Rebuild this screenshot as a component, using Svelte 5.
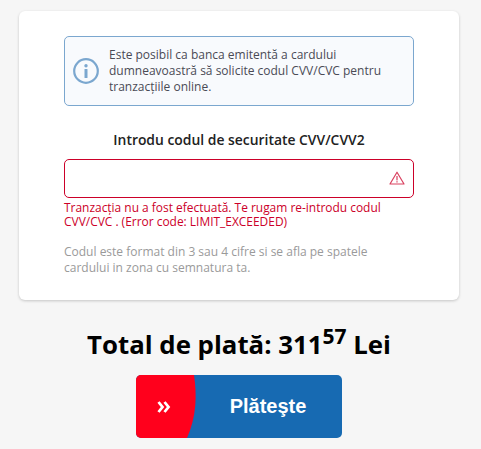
<script>
  // Card payment security code step: info note, CVV field with error, total and pay button.
  let code = '';
</script>

<main class="page">
  <section class="card">
    <div class="notice">
      <svg class="notice-icon" viewBox="0 0 26 26" width="26" height="26" aria-hidden="true">
        <circle cx="13" cy="13" r="11.8" fill="none" stroke="#7ba7cf" stroke-width="2.2" />
        <circle cx="13" cy="7.8" r="1.7" fill="#7ba7cf" />
        <rect x="11.5" y="11" width="3" height="9" rx="0.6" fill="#7ba7cf" />
      </svg>
      <p>Este posibil ca banca emitentă a cardului dumneavoastră să solicite codul CVV/CVC pentru tranzacțiile online.</p>
    </div>

    <label class="field-label" for="cvv">Introdu codul de securitate CVV/CVV2</label>

    <div class="field">
      <input id="cvv" type="text" bind:value={code} />
      <svg class="warn" viewBox="0 0 16 14" width="16" height="14" aria-hidden="true">
        <path d="M8 1.2 15 13H1Z" fill="none" stroke="#d9405f" stroke-width="1.2" stroke-linejoin="round" />
        <rect x="7.4" y="5" width="1.2" height="4.4" fill="#d9405f" />
        <rect x="7.4" y="10.2" width="1.2" height="1.3" fill="#d9405f" />
      </svg>
    </div>

    <p class="error">Tranzacția nu a fost efectuată. Te rugam re-introdu codul CVV/CVC . (Error code: LIMIT_EXCEEDED)</p>
    <p class="hint">Codul este format din 3 sau 4 cifre si se afla pe spatele cardului in zona cu semnatura ta.</p>
  </section>

  <h2 class="total">Total de plată: 311<sup>57</sup> Lei</h2>

  <button class="pay" type="button">
    <svg class="swoosh" viewBox="0 0 62 63" width="62" height="63" aria-hidden="true">
      <path d="M0 0H58C61 20 60.500 42 51 63H0Z" fill="#ff001c" />
    </svg>
    <svg class="chevrons" viewBox="0 0 14 12" width="14" height="12" aria-hidden="true">
      <path d="M1.500 1 5.500 6 1.500 11M7.500 1 11.500 6 7.500 11" fill="none" stroke="#fff" stroke-width="2.800" />
    </svg>
    <span>Plăteşte</span>
  </button>
</main>

<style>
  :global(body) {
    margin: 0;
    background: #f6f6f6;
  }

  .page {
    display: flex;
    flex-direction: column;
    align-items: center;
    width: 478px;
    padding-top: 11px;
    font-family: "Open Sans", "Liberation Sans", sans-serif;
  }

  .card {
    box-sizing: border-box;
    width: 440px;
    height: 289px;
    padding: 25px 45px 0;
    background: #fff;
    border-radius: 6px;
    box-shadow: 0 1px 3px rgba(0, 0, 0, 0.2);
  }

  .notice {
    display: flex;
    align-items: center;
    gap: 10px;
    box-sizing: border-box;
    height: 70px;
    padding: 0 8px;
    background: #f8fafd;
    border: 1px solid #7ba7cf;
    border-radius: 5px;
  }

  .notice-icon {
    flex: none;
  }

  .notice p {
    margin: 0;
    color: #4a4a55;
    font-size: 12px;
    line-height: 16px;
  }

  .field-label {
    display: block;
    margin-top: 24px;
    color: #222;
    font-size: 13.9px;
    font-weight: 600;
    line-height: 19px;
    text-align: center;
  }

  .field {
    position: relative;
    margin-top: 10px;
  }

  .field input {
    display: block;
    box-sizing: border-box;
    width: 100%;
    height: 39px;
    padding: 0 40px 0 10px;
    background: #fff;
    border: 1px solid #cc0029;
    border-radius: 5px;
    outline: none;
  }

  .warn {
    position: absolute;
    top: 12px;
    right: 9px;
  }

  .error {
    margin: 3px 0 0;
    color: #cc0029;
    font-size: 11.95px;
    line-height: 14px;
  }

  .hint {
    margin: 15px 0 0;
    color: #9a9a9a;
    font-size: 12px;
    line-height: 16px;
  }

  .total {
    margin: 26px 0 0;
    color: #000;
    font-size: 25.8px;
    font-weight: 700;
    line-height: 36px;
  }

  .total sup {
    font-size: 21px;
    line-height: 0;
    vertical-align: 10px;
  }

  .pay {
    position: relative;
    overflow: hidden;
    width: 206px;
    height: 63px;
    margin-top: 13px;
    padding: 0 0 0 58px;
    background: #176ab2;
    border: none;
    border-radius: 5px;
    color: #fff;
    font-family: "Liberation Sans", Arial, sans-serif;
    font-size: 20px;
    font-weight: 700;
  }

  .pay span {
    position: relative;
  }

  .swoosh {
    position: absolute;
    top: 0;
    left: 0;
  }

  .chevrons {
    position: absolute;
    top: 26px;
    left: 21px;
  }
</style>
